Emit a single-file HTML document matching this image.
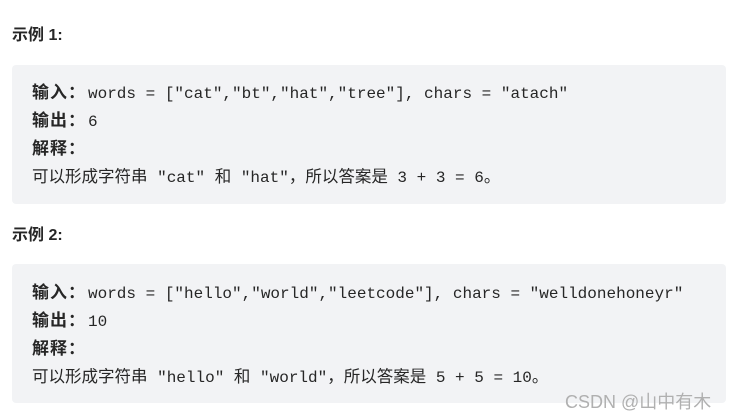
<!DOCTYPE html>
<html><head><meta charset="utf-8"><style>
body{margin:0;width:731px;height:419px;background:#fff;position:relative;overflow:hidden;font-family:"Liberation Sans","Noto Sans CJK SC",sans-serif;color:#262626}
.h{position:absolute;left:12px;font-size:16px;font-weight:bold;color:#262626;line-height:20px}
.box{position:absolute;left:12px;width:714px;height:139px;background:#f2f3f5;border-radius:4px}
.l{position:absolute;left:32px;height:28px;line-height:28px;white-space:nowrap;font-size:16px;color:#262626}
.l b{font-family:"Noto Sans CJK SC",sans-serif;font-weight:bold;display:inline-block;width:56px;font-size:17px;letter-spacing:1px}
.m{font-family:"Liberation Mono",monospace;font-size:16px}
.c{font-family:"Noto Sans CJK SC",sans-serif;font-size:16.5px}
.wm{position:absolute;left:565px;top:388px;font-size:18px;color:#b0b0b0;font-family:"Liberation Sans","Noto Sans CJK SC",sans-serif}
</style></head><body>
<div class="h" style="top:26px">示例 1:</div>
<div class="box" style="top:65px"></div>
<div class="l" style="top:77px"><b>输入：</b><span class="m">words = ["cat","bt","hat","tree"], chars = "atach"</span></div>
<div class="l" style="top:105px"><b>输出：</b><span class="m">6</span></div>
<div class="l" style="top:133px"><b>解释：</b></div>
<div class="l" style="top:161px"><span class="c">可以形成字符串</span><span class="m"> "cat" </span><span class="c">和</span><span class="m"> "hat"</span><span class="c">，所以答案是</span><span class="m"> 3 + 3 = 6</span><span class="c">。</span></div>
<div class="h" style="top:226px">示例 2:</div>
<div class="box" style="top:264px"></div>
<div class="l" style="top:277px"><b>输入：</b><span class="m">words = ["hello","world","leetcode"], chars = "welldonehoneyr"</span></div>
<div class="l" style="top:305px"><b>输出：</b><span class="m">10</span></div>
<div class="l" style="top:333px"><b>解释：</b></div>
<div class="l" style="top:361px"><span class="c">可以形成字符串</span><span class="m"> "hello" </span><span class="c">和</span><span class="m"> "world"</span><span class="c">，所以答案是</span><span class="m"> 5 + 5 = 10</span><span class="c">。</span></div>
<div class="wm">CSDN @山中有木</div>
</body></html>
